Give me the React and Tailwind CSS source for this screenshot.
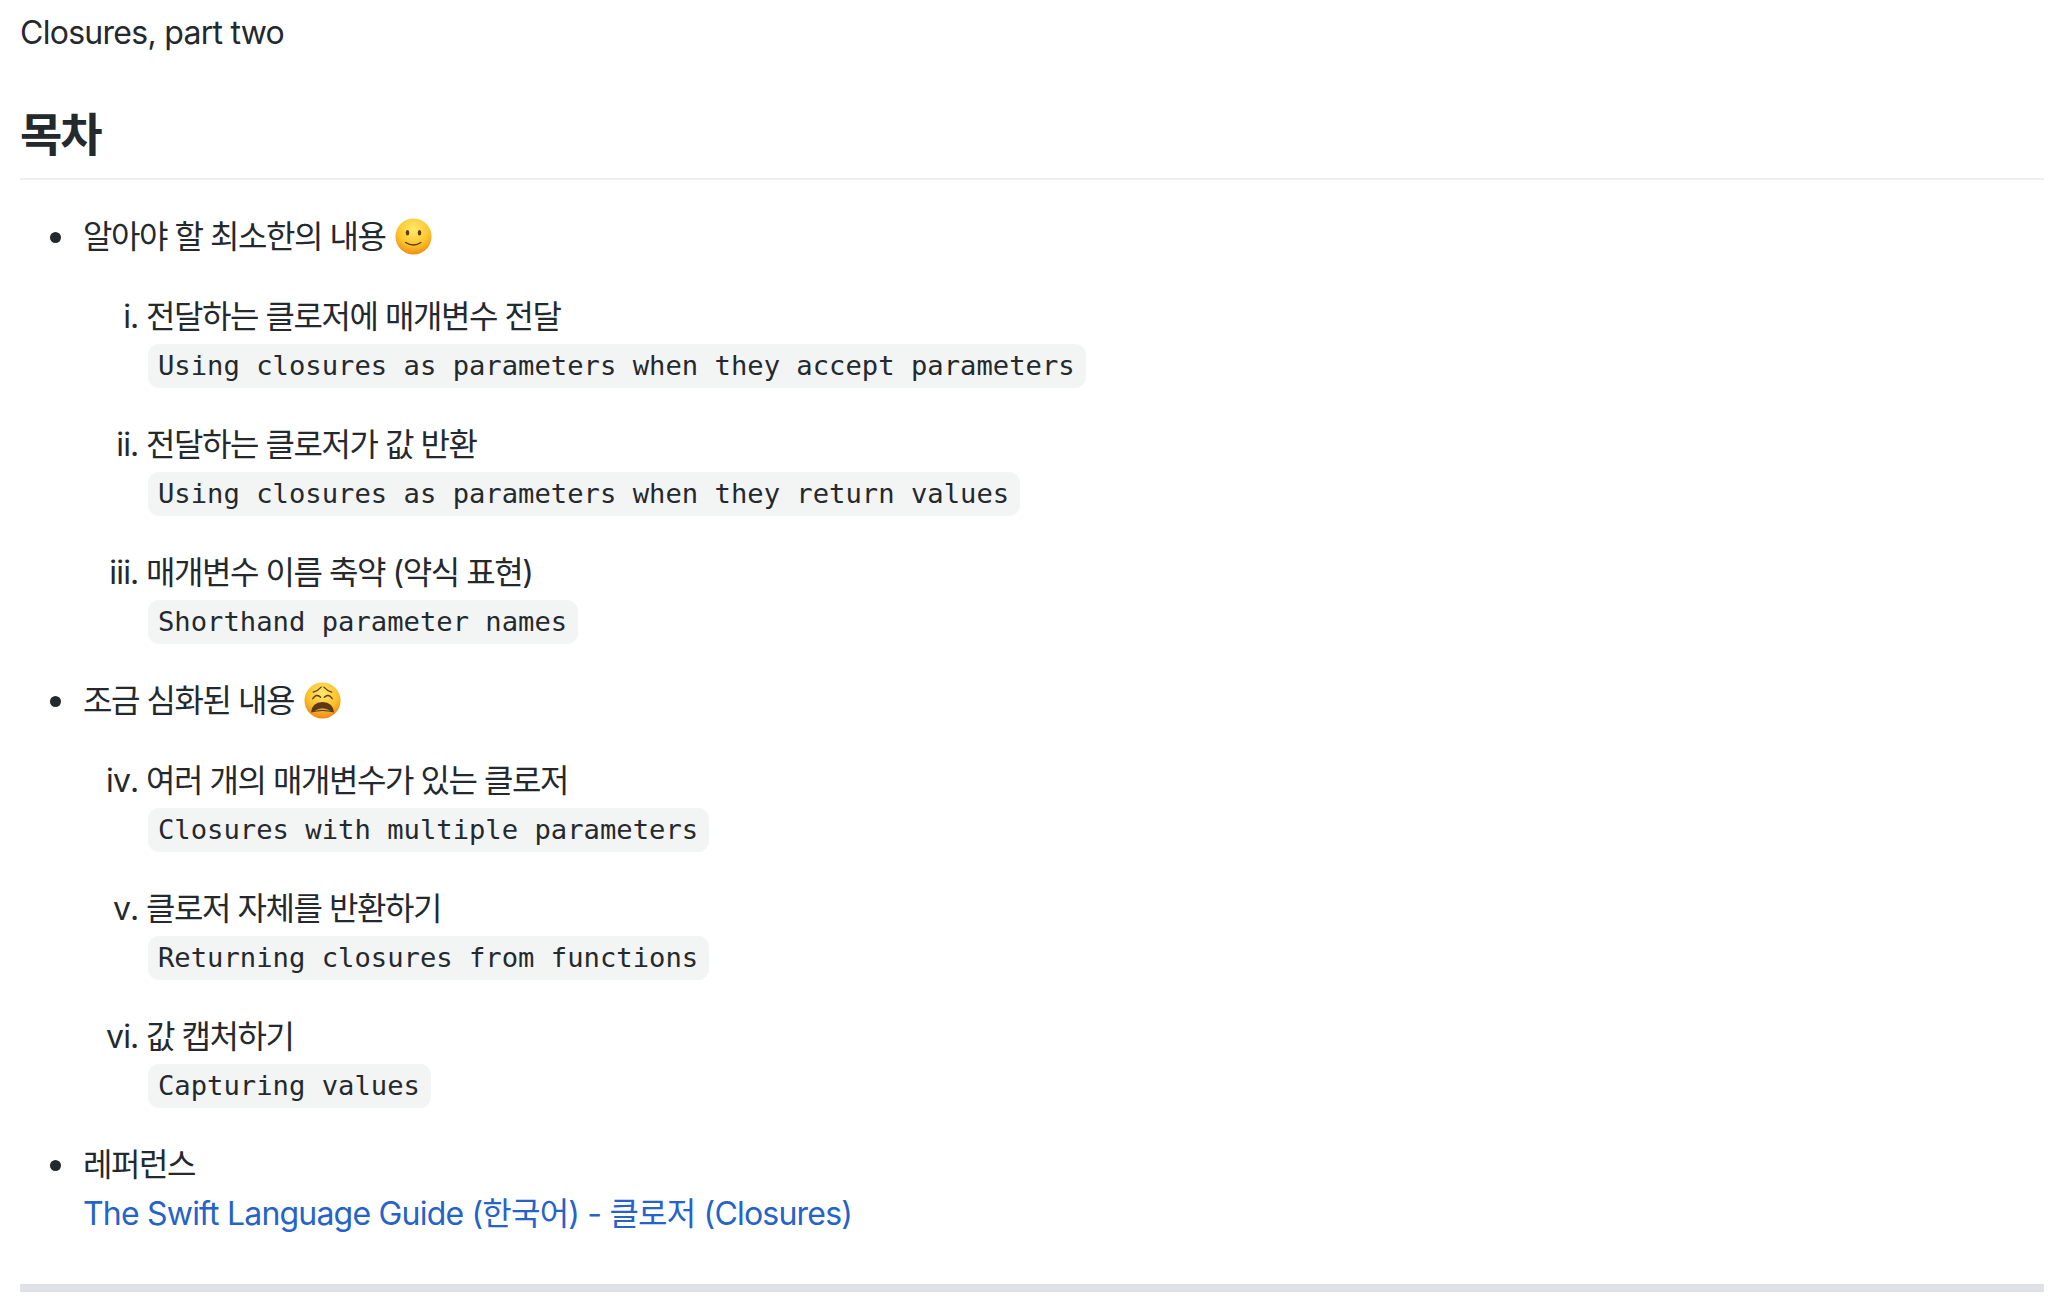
const Smile = () => (
  <svg viewBox="0 0 40 40" className="inline-block w-[37px] h-[37px] align-[-7px] ml-[2px]">
    <defs>
      <radialGradient id="sg" cx="50%" cy="30%" r="72%">
        <stop offset="0%" stopColor="#ffe96e" />
        <stop offset="60%" stopColor="#fcc62d" />
        <stop offset="100%" stopColor="#ee8a12" />
      </radialGradient>
    </defs>
    <circle cx="20" cy="20" r="19.5" fill="url(#sg)" />
    <ellipse cx="13.5" cy="16" rx="1.9" ry="3" fill="#5c3a15" />
    <ellipse cx="26.5" cy="16" rx="1.9" ry="3" fill="#5c3a15" />
    <path d="M11.5 26.5 Q20 32 28 26.5" fill="none" stroke="#5c3a15" strokeWidth="1.5" strokeLinecap="round" />
  </svg>
);

const Weary = () => (
  <svg viewBox="0 0 40 40" className="inline-block w-[37px] h-[37px] align-[-7px] ml-[2px]">
    <defs>
      <radialGradient id="wg" cx="50%" cy="30%" r="72%">
        <stop offset="0%" stopColor="#ffe96e" />
        <stop offset="60%" stopColor="#fcc02a" />
        <stop offset="100%" stopColor="#ee8412" />
      </radialGradient>
    </defs>
    <circle cx="20" cy="20" r="19.5" fill="url(#wg)" />
    <path d="M10 11 Q15 9.5 18.5 5.5 M30 11 Q25 9.5 21.5 5.5" fill="none" stroke="#5c3a15" strokeWidth="1.4" strokeLinecap="round" />
    <path d="M9.5 18 Q13.5 12 18 16.5 M30.5 18 Q26.5 12 22 16.5" fill="none" stroke="#5c3a15" strokeWidth="1.5" strokeLinecap="round" />
    <path d="M7.5 33 Q8.5 22 20 21.5 Q31.5 22 32.5 33 Q20 29.5 7.5 33 Z" fill="#5c3a15" />
    <path d="M11 31.5 Q20 25 29 31.5 Q20 29 11 31.5 Z" fill="#d2a469" />
  </svg>
);

const Code = ({ children }) => (
  <code className="inline-block align-[1px] ml-[2px] h-[44px] leading-[43px] pl-[10px] pr-[11px] rounded-[11px] bg-[#f3f4f4] text-[27.2px] tracking-normal font-['DejaVu_Sans_Mono','Liberation_Mono',monospace]">
    {children}
  </code>
);

const Sub = ({ title, code }) => (
  <li className="mb-[28px] h-[100px] leading-[48px] tracking-[-0.72px]">
    <div className="h-[48px] tracking-[-1.45px]">{title}</div>
    <Code>{code}</Code>
  </li>
);

const Bullet = () => (
  <span className="absolute left-[-33px] top-[19px] w-[11px] h-[11px] rounded-full bg-[#24292e]" />
);

export default function App() {
  return (
    <div className="bg-white h-[1316px] overflow-hidden pl-[20px] pr-[18px] pt-[9px] text-[#24292e] text-[32px] leading-[48px] font-['Inter','Noto_Sans_CJK_KR',sans-serif]">
      <p className="h-[48px] tracking-[-0.72px]">Closures, part two</p>
      <h2 className="mt-[42px] h-[81px] border-b-2 border-[#eeeff3] text-[46px] leading-[70px] font-bold tracking-[-2px]">목차</h2>
      <ul className="list-none pl-[63px] mt-[33px]">
        <li className="relative mb-[28px]">
          <Bullet />
          <div className="h-[48px] mb-[32px] tracking-[-1.45px]">알아야 할 최소한의 내용 <Smile /></div>
          <ol className="list-[lower-roman] pl-[63px]">
            <Sub title="전달하는 클로저에 매개변수 전달" code="Using closures as parameters when they accept parameters" />
            <Sub title="전달하는 클로저가 값 반환" code="Using closures as parameters when they return values" />
            <Sub title="매개변수 이름 축약 (약식 표현)" code="Shorthand parameter names" />
          </ol>
        </li>
        <li className="relative mb-[28px]">
          <Bullet />
          <div className="h-[48px] mb-[32px] tracking-[-1.45px]">조금 심화된 내용 <Weary /></div>
          <ol start={4} className="list-[lower-roman] pl-[63px]">
            <Sub title="여러 개의 매개변수가 있는 클로저" code="Closures with multiple parameters" />
            <Sub title="클로저 자체를 반환하기" code="Returning closures from functions" />
            <Sub title="값 캡처하기" code="Capturing values" />
          </ol>
        </li>
        <li className="relative">
          <Bullet />
          <div className="h-[49px] tracking-[-1.45px]">레퍼런스</div>
          <a className="text-[#2563c9] tracking-[-0.8px]" href="#">The Swift Language Guide (한국어) - 클로저 (Closures)</a>
        </li>
      </ul>
      <hr className="mt-[46px] h-[8px] border-0 bg-[#e0e1e6]" />
    </div>
  );
}
